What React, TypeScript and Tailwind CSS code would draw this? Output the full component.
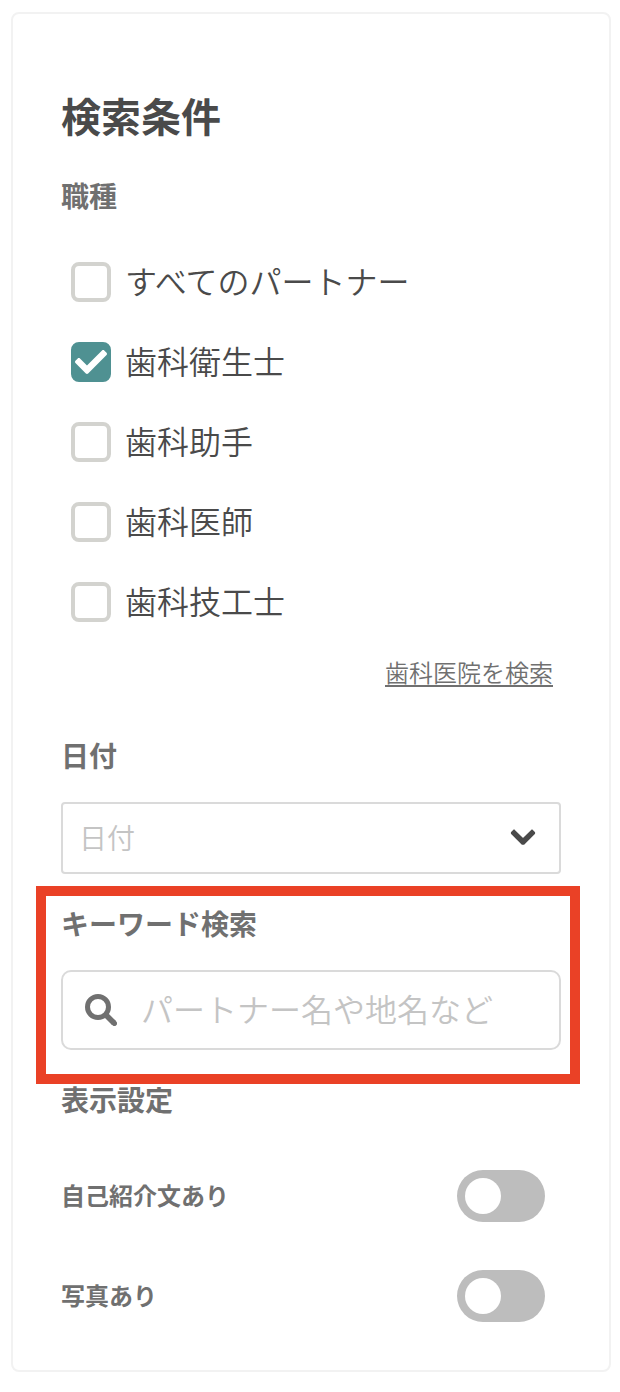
import { useState } from "react";
import type { ReactNode } from "react";
import { FaCheck } from "react-icons/fa";

const jobs = [
  { id: "all", label: "すべてのパートナー" },
  { id: "hygienist", label: "歯科衛生士" },
  { id: "assistant", label: "歯科助手" },
  { id: "dentist", label: "歯科医師" },
  { id: "technician", label: "歯科技工士" },
];

function SearchIcon() {
  return (
    <svg viewBox="0 0 32 32" className="size-8 shrink-0" fill="none" stroke="currentColor">
      <circle cx="13" cy="13" r="10.5" strokeWidth="5" />
      <path d="M20.5 20.5 29 29" strokeWidth="5.6" />
      <path d="M28.6 28.6 29.4 29.4" strokeWidth="5.2" strokeLinecap="round" />
    </svg>
  );
}

function ChevronIcon() {
  return (
    <svg
      viewBox="0 0 26 18"
      className="pointer-events-none absolute top-[26px] right-[25px] h-[18px] w-[26px] text-[#4a4a4a]"
      fill="currentColor"
      stroke="currentColor"
      strokeWidth="1.6"
      strokeLinejoin="round"
    >
      <path d="M4 2.2 13 11.1 22 2.2 24.3 4.6 24.3 5.4 13.8 16 12.2 16 1.7 5.4 1.7 4.6Z" />
    </svg>
  );
}

function JobOption({ id, label, checked, onChange }: { id: string; label: string; checked: boolean; onChange: () => void }) {
  return (
    <label htmlFor={id} className="flex h-20 items-center gap-3.5 pl-2.5">
      <span className="relative flex size-10 shrink-0">
        <input
          id={id}
          type="checkbox"
          checked={checked}
          onChange={onChange}
          className="peer size-10 appearance-none rounded-lg border-4 border-[#d3d3cf] bg-white checked:border-[#4f9192] checked:bg-[#4f9192]"
        />
        <FaCheck className="pointer-events-none absolute inset-1 hidden size-8 text-white peer-checked:block" />
      </span>
      <span className="pb-1 text-[32px] leading-10 font-[350] text-[#4a4a4a]">{label}</span>
    </label>
  );
}

function FieldLabel({ htmlFor, children }: { htmlFor: string; children: ReactNode }) {
  return (
    <label htmlFor={htmlFor} className="block text-[28px] leading-[30px] font-bold">
      {children}
    </label>
  );
}

function ToggleRow({ id, label }: { id: string; label: string }) {
  const [on, setOn] = useState(false);
  return (
    <div className="flex h-[52px] items-center justify-between pr-4">
      <label htmlFor={id} className="pb-0.5 text-2xl leading-6 font-bold">
        {label}
      </label>
      <input
        id={id}
        type="checkbox"
        role="switch"
        checked={on}
        onChange={() => setOn(!on)}
        className="flex h-[52px] w-[88px] shrink-0 appearance-none items-center rounded-full bg-[#bdbdbd] px-2 before:size-9 before:rounded-full before:bg-white checked:justify-end checked:bg-[#4f9192]"
      />
    </div>
  );
}

export default function App() {
  const [selected, setSelected] = useState<string[]>(["hygienist"]);
  const toggle = (id: string) =>
    setSelected((s) => (s.includes(id) ? s.filter((x) => x !== id) : [...s, id]));

  return (
    <main className="bg-white pt-3 pr-[9px] pb-5 pl-[11px] font-['Noto_Sans_CJK_JP',sans-serif] text-[#707070]" lang="ja">
      <form className="rounded-lg border-2 border-[#f2f2f2] px-12 pt-20 pb-12">
        <h1 className="text-[40px] leading-[42px] font-bold text-[#4a4a4a]">検索条件</h1>

        <fieldset className="mt-11">
          <legend className="text-[28px] leading-[30px] font-bold">職種</legend>
          <div className="mt-8">
            {jobs.map((job) => (
              <JobOption
                key={job.id}
                id={job.id}
                label={job.label}
                checked={selected.includes(job.id)}
                onChange={() => toggle(job.id)}
              />
            ))}
          </div>
        </fieldset>

        <div className="mt-[18px] flex justify-end pr-2">
          <a href="#clinics" className="text-2xl leading-6 font-[350] underline decoration-2 underline-offset-3">
            歯科医院を検索
          </a>
        </div>

        <section className="mt-14">
          <FieldLabel htmlFor="date">日付</FieldLabel>
          <div className="relative mt-8">
            <select
              id="date"
              defaultValue=""
              className="block h-[72px] w-full appearance-none rounded border-2 border-[#dadada] bg-white pr-16 pb-0.5 pl-4 text-[28px] font-[350] text-[#c4c4c4]"
            >
              <option value="">日付</option>
            </select>
            <ChevronIcon />
          </div>
        </section>

        <section className="relative mt-[34px]">
          <FieldLabel htmlFor="keyword">キーワード検索</FieldLabel>
          <div className="mt-8 flex h-20 items-center gap-6 rounded-[10px] border-2 border-[#dadada] px-[22px]">
            <SearchIcon />
            <input
              id="keyword"
              type="text"
              placeholder="パートナー名や地名など"
              className="h-full min-w-0 flex-1 bg-transparent pb-1 text-[32px] font-[350] text-[#4a4a4a] outline-none placeholder:text-[#c4c4c4]"
            />
          </div>
          <div className="pointer-events-none absolute -top-[22px] -right-[19px] -bottom-[34px] -left-[25px] border-10 border-[#ea4126]" />
        </section>

        <section className="mt-[34px]">
          <h2 className="text-[28px] leading-[30px] font-bold">表示設定</h2>
          <div className="mt-14 flex flex-col gap-12">
            <ToggleRow id="has-intro" label="自己紹介文あり" />
            <ToggleRow id="has-photo" label="写真あり" />
          </div>
        </section>
      </form>
    </main>
  );
}
